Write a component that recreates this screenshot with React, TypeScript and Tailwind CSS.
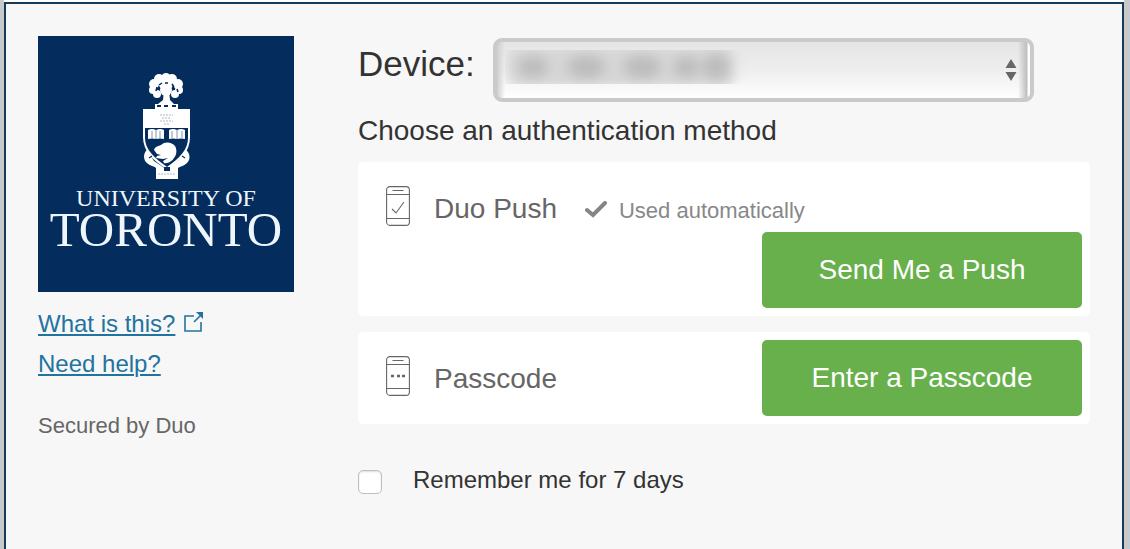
import React from "react";

function Crest() {
  return (
    <svg viewBox="0 0 70 125" className="h-[125px] w-[70px]" role="img" aria-label="University crest">
      <g fill="#fff">
        <circle cx="35" cy="17" r="8" />
        <circle cx="28" cy="14" r="5" />
        <circle cx="35" cy="12" r="4" />
        <circle cx="41" cy="14" r="5" />
        <circle cx="23" cy="19" r="5" />
        <circle cx="47" cy="19" r="5" />
        <circle cx="22" cy="25" r="4" />
        <circle cx="48" cy="25" r="4" />
        <circle cx="26" cy="29" r="4" />
        <circle cx="44" cy="29" r="4" />
        <circle cx="35" cy="25" r="6" />
        <path d="M33 26h5l1 9 4 4H27l5-4z" />
        <path d="M24 39h23v5H24z" />
        <path d="M12 44h47v28c0 14-9 24-23 32C22 96 12 86 12 72z" />
        <path d="M16 85c-4 3-4 10 0 13 3 3 7 3 9 5v11h22v-11c3-2 6-2 9-5 4-4 3-10-1-13l-8 11-12 8-12-8z" />
      </g>
      <path d="M14 63h43v10c0 11-8 20-21 29C23 93 14 84 14 73z" fill="#042c5c" />
      <g fill="#fff">
        <path d="M17 65q4-2 8 0q4-2 8 0v9q-4-1-8 0q-4-1-8 0z" />
        <path d="M38 65q4-2 8 0q4-2 8 0v9q-4-1-8 0q-4-1-8 0z" />
        <path d="M23 85c1-4 5-4 7-5 4-4 11-3 14 1 2 3 2 9-1 12-2 3-6 6-10 5l-1-2 5-3-5 1-7-1 1-2 4-1-4-1z" />
      </g>
      <g fill="none" stroke="#042c5c">
        <path d="M25 26l1-4M28 20l3-2M34 18h3M41 19l2 3M46 24l1 3" strokeWidth="1.5" />
        <path d="M26 41h4M33 41h4M41 41h4" strokeWidth="2" />
        <path d="M18 93l3-2M54 93l-3-2" strokeWidth="1.2" />
        <path d="M25 65v9M46 65v9M21 66v7M29 66v7M41 66v7M51 66v7" strokeWidth=".5" />
      </g>
      <path d="M33 102h6v4h-6z" fill="#042c5c" />
      <path d="M29 50h13M31 53h9M29 56h13M33 59h5M27 109h17" stroke="#abb6c9" strokeDasharray="2 1" />
    </svg>
  );
}

function Phone({ children }: { children: React.ReactNode }) {
  return (
    <svg viewBox="0 0 24 40" className="h-10 w-6 shrink-0" fill="none" stroke="#666" aria-hidden="true">
      <rect x=".6" y=".6" width="22.8" height="38.8" rx="3.4" strokeWidth="1.1" />
      <path d="M.5 8.5h23M.5 32.5h23M6.5 4.5h11" strokeWidth="1.1" />
      {children}
    </svg>
  );
}

const actionButton =
  "h-19 w-80 rounded-[5px] bg-[#67b04c] text-center text-[28px] leading-8 text-white";

export default function App() {
  return (
    <div className="min-h-screen bg-[#c9c9c9] pr-1.5 pl-1 font-['Liberation_Sans',Arial,sans-serif] text-[#333]">
      <div className="flex min-h-screen flex-col bg-white pt-0.5">
        <main className="flex grow gap-16 border-2 border-b-0 border-[#17395a] bg-[#f7f7f7] pt-8 pr-8 pl-8">
          <aside className="w-64 shrink-0">
            <div className="flex h-64 flex-col items-center bg-[#042c5c] pt-[29px] font-['Liberation_Serif',serif] text-[#eef6fc]">
              <Crest />
              <span className="-mt-1 text-[24px] leading-6">UNIVERSITY OF</span>
              <span className="text-[49px] leading-10">TORONTO</span>
            </div>
            <nav className="mt-3 flex flex-col items-start text-[24px] leading-10 text-[#23739f]">
              <a href="#about" className="flex items-center gap-2">
                <span className="underline decoration-2 underline-offset-2">What is this?</span>
                <svg viewBox="0 0 22 22" className="mb-1 size-[22px]" fill="none" stroke="#23739f" strokeWidth="1.6" aria-hidden="true">
                  <path d="M11 5H2v15h16v-9M11 11l7-7" />
                  <path d="M13 1h7v7z" fill="#23739f" stroke="none" />
                </svg>
              </a>
              <a href="#help" className="underline decoration-2 underline-offset-2">Need help?</a>
            </nav>
            <p className="mt-[26px] text-[22px] leading-8 text-[#666]">Secured by Duo</p>
          </aside>

          <form className="min-w-0 grow" onSubmit={(e) => e.preventDefault()}>
            <div className="flex items-start gap-[18px]">
              <label htmlFor="device" className="text-[35px] leading-14">Device:</label>
              <div className="relative mt-0.5 w-[541px]">
                <select
                  id="device"
                  className="block h-16 w-full appearance-none rounded-[9px] border-4 border-[#cacaca] bg-[linear-gradient(to_right,#cfcfcf,transparent_8px,transparent_calc(100%-12px),#bdbdbd_calc(100%-3px),#fff_calc(100%-2px)),linear-gradient(#e5e5e5,#eeeeee_50%,#fff)] px-4 text-[24px] text-transparent"
                >
                  <option>Phone</option>
                </select>
                <div className="pointer-events-none absolute top-3 left-3 h-[34px] w-64 overflow-hidden">
                  <svg viewBox="0 0 256 34" className="h-full w-full" aria-hidden="true">
                    <defs>
                      <filter id="soft" x="-20%" y="-60%" width="140%" height="220%">
                        <feGaussianBlur stdDeviation="6" />
                      </filter>
                    </defs>
                    <g filter="url(#soft)">
                      <rect x="2" y="-4" width="228" height="42" rx="12" fill="#d6d6d6" />
                      <g fill="#bdbdbd">
                        <ellipse cx="28" cy="17" rx="15" ry="11" />
                        <ellipse cx="81" cy="17" rx="19" ry="12" />
                        <ellipse cx="137" cy="17" rx="19" ry="12" />
                        <ellipse cx="181" cy="17" rx="13" ry="11" />
                        <ellipse cx="211" cy="17" rx="14" ry="13" />
                      </g>
                    </g>
                  </svg>
                </div>
                <svg viewBox="0 0 12 22" className="pointer-events-none absolute top-[21px] right-[17px] h-[22px] w-3" fill="#666" aria-hidden="true">
                  <path d="M6 0l5.5 9H.5zM.5 13h11L6 22z" />
                </svg>
              </div>
            </div>

            <h1 className="mt-[9px] text-[28px] leading-10">Choose an authentication method</h1>

            <section className="mt-[11px] rounded-[5px] bg-white px-2 pb-2">
              <div className="flex h-[70px] items-start pt-6 pl-5">
                <Phone>
                  <path d="M6 23l4 4 8-11" strokeWidth="1.1" />
                </Phone>
                <div className="flex items-baseline pt-[3px]">
                  <h2 className="ml-6 text-[28px] leading-10 text-[#666]">Duo Push</h2>
                  <svg viewBox="0 0 22 17" className="ml-7 h-[17px] w-[22px]" fill="none" stroke="#858585" strokeWidth="4" strokeLinecap="round" aria-hidden="true">
                    <path d="M2 9l6 5L20 2" />
                  </svg>
                  <span className="ml-3 text-[22px] leading-10 text-[#888]">Used automatically</span>
                </div>
              </div>
              <div className="flex justify-end">
                <button type="button" className={actionButton}>Send Me a Push</button>
              </div>
            </section>

            <section className="mt-4 flex items-start rounded-[5px] bg-white p-2 pl-7">
              <div className="flex grow items-start pt-4">
                <Phone>
                  <path d="M5 20h3M11 20h3M16 20h3" strokeWidth="2.4" />
                </Phone>
                <h2 className="ml-6 pt-[3px] text-[28px] leading-10 text-[#666]">Passcode</h2>
              </div>
              <button type="button" className={actionButton}>Enter a Passcode</button>
            </section>

            <label className="mt-9 flex items-start gap-[31px] text-[24px] leading-10">
              <input
                type="checkbox"
                className="mt-[10px] size-6 appearance-none rounded-[5px] border border-[#bfbfbf] bg-white shadow-[inset_0_1px_2px_#ddd] checked:bg-[#67b04c]"
              />
              Remember me for 7 days
            </label>
          </form>
        </main>
      </div>
    </div>
  );
}
